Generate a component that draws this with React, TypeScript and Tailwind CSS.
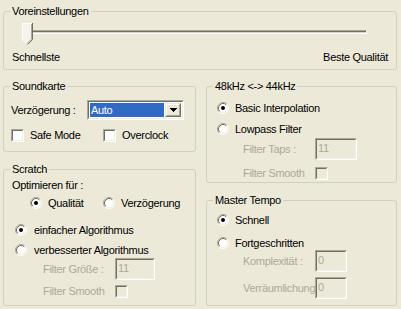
import React from "react";

const sunkenOuter = "border border-t-[#aca899] border-l-[#aca899] border-r-white border-b-white";
const sunkenInner = "border border-t-[#716f64] border-l-[#716f64] border-r-[#f1efe2] border-b-[#f1efe2]";

function Group({ title, className, children }: { title: string; className?: string; children?: React.ReactNode }) {
  return (
    <fieldset className={`border border-[#d0d0bf] rounded-[3px] ${className ?? ""}`}>
      <legend className="ml-[6px] px-[2px] h-[13px] leading-[13px]">{title}</legend>
      {children}
    </fieldset>
  );
}

function Radio({ checked }: { checked?: boolean }) {
  return (
    <svg width="12" height="12" viewBox="0 0 12 12" className="shrink-0">
      <circle cx="6" cy="6" r="4.5" fill="#fff" />
      <path d="M2.11 9.89A5.5 5.5 0 0 1 9.89 2.11" stroke="#aca899" fill="none" />
      <path d="M9.89 2.11A5.5 5.5 0 0 1 2.11 9.89" stroke="#fff" fill="none" />
      <path d="M2.82 9.18A4.5 4.5 0 0 1 9.18 2.82" stroke="#716f64" fill="none" />
      <path d="M9.18 2.82A4.5 4.5 0 0 1 2.82 9.18" stroke="#f1efe2" fill="none" />
      {checked && <circle cx="6" cy="6" r="2" fill="#000" />}
    </svg>
  );
}

function Check({ disabled }: { disabled?: boolean }) {
  return (
    <span className={`block w-[13px] h-[13px] shrink-0 ${sunkenOuter}`}>
      <span className={`block h-full ${sunkenInner} ${disabled ? "bg-[#ece9d8]" : "bg-white"}`} />
    </span>
  );
}

function Edit({ value, className }: { value: string; className: string }) {
  return (
    <span className={`block shrink-0 ${sunkenOuter} ${className}`}>
      <span className={`flex items-center h-full pl-[1px] pb-[2px] bg-[#ece9d8] text-[#aca899] ${sunkenInner}`}>{value}</span>
    </span>
  );
}

function RadioRow({ label, checked, className }: { label: string; checked?: boolean; className: string }) {
  return (
    <div className={`flex items-center h-[12px] gap-[6px] ${className}`}>
      <Radio checked={checked} />
      <span>{label}</span>
    </div>
  );
}

export default function App() {
  return (
    <div className="w-[401px] h-[309px] overflow-hidden bg-[#ece9d8] pl-[3px] pt-[5px] text-[11px] leading-[13px] tracking-[-0.3px] text-black font-['Liberation_Sans',Arial,sans-serif]">
      <Group title="Voreinstellungen" className="w-[394px] h-[65px]">
        <div className="relative ml-[18px] mt-[5px] w-[350px] h-[22px]">
          <div className={`absolute left-[5px] right-[5px] top-[7px] h-[4px] ${sunkenOuter}`}>
            <div className="h-full border-t border-[#716f64] bg-[#d8d5c8]" />
          </div>
          <svg width="11" height="22" viewBox="0 0 11 22" className="absolute left-0 top-0">
            <path d="M0 0h10v16l-5 5l-5-5z" fill="#f4f3ee" />
            <path d="M0.5 16V0.5H9.5" stroke="#fff" fill="none" />
            <path d="M0.5 16.5L5 21" stroke="#fff" fill="none" />
            <path d="M10.5 0V16.5L5.5 21.5" stroke="#716f64" fill="none" />
            <path d="M9.5 1V16L5 20.5" stroke="#aca899" fill="none" />
          </svg>
        </div>
        <div className="flex justify-between px-[8px] mt-[6px]">
          <span>Schnellste</span>
          <span>Beste Qualität</span>
        </div>
      </Group>

      <div className="flex gap-[10px] mt-[10px]">
        <div className="flex flex-col w-[193px] gap-[11px]">
          <Group title="Soundkarte" className="h-[72px]">
            <div className="flex items-center pl-[7px] mt-[7px]">
              <span className="w-[76px]">Verzögerung :</span>
              <span className={`flex w-[97px] h-[20px] ${sunkenOuter}`}>
                <span className={`flex flex-1 p-[1px] gap-[1px] bg-white ${sunkenInner}`}>
                  <span className="flex-1 flex items-center pl-[1px] bg-[#316ac5] text-white">Auto</span>
                  <span className="w-[16px] border border-t-[#ece9d8] border-l-[#ece9d8] border-r-[#716f64] border-b-[#716f64]">
                    <span className="flex items-center justify-center h-full border border-t-white border-l-white border-r-[#aca899] border-b-[#aca899] bg-[#ece9d8]">
                      <svg width="7" height="4" viewBox="0 0 7 4">
                        <path d="M0 0h7v1h-1v1h-1v1h-1v1h-1v-1h-1v-1h-1v-1h-1z" fill="#000" />
                      </svg>
                    </span>
                  </span>
                </span>
              </span>
            </div>
            <div className="flex items-center h-[13px] pl-[7px] mt-[9px]">
              <div className="flex items-center gap-[6px] w-[92px]">
                <Check />
                <span>Safe Mode</span>
              </div>
              <div className="flex items-center gap-[6px]">
                <Check />
                <span>Overclock</span>
              </div>
            </div>
          </Group>

          <Group title="Scratch" className="h-[143px]">
            <div className="pl-[8px] mt-[3px]">Optimieren für :</div>
            <div className="flex items-center pl-[26px] mt-[5px]">
              <RadioRow label="Qualität" checked className="w-[73px] gap-[5px]" />
              <RadioRow label="Verzögerung" className="gap-[4px]" />
            </div>
            <RadioRow label="einfacher Algorithmus" checked className="pl-[11px] mt-[15px] gap-[7px]" />
            <RadioRow label="verbesserter Algorithmus" className="pl-[11px] mt-[8px] gap-[7px]" />
            <div className="flex items-center pl-[39px] mt-[2px] text-[#aca899]">
              <span className="w-[72px]">Filter Größe :</span>
              <Edit value="11" className="w-[40px] h-[22px]" />
            </div>
            <div className="flex items-center pl-[39px] mt-[5px] text-[#aca899]">
              <span className="w-[72px]">Filter Smooth</span>
              <Check disabled />
            </div>
          </Group>
        </div>

        <div className="flex flex-col w-[191px] gap-[11px]">
          <Group title="48kHz <-> 44kHz" className="h-[103px]">
            <RadioRow label="Basic Interpolation" checked className="pl-[10px] mt-[9px]" />
            <RadioRow label="Lowpass Filter" className="pl-[10px] mt-[9px]" />
            <div className="flex items-center pl-[36px] mt-[3px] text-[#aca899]">
              <span className="w-[72px]">Filter Taps :</span>
              <Edit value="11" className="w-[42px] h-[22px]" />
            </div>
            <div className="flex items-center pl-[36px] mt-[7px] text-[#aca899]">
              <span className="w-[72px]">Filter Smooth</span>
              <Check disabled />
            </div>
          </Group>

          <Group title="Master Tempo" className="h-[112px]">
            <RadioRow label="Schnell" checked className="pl-[10px] mt-[7px]" />
            <RadioRow label="Fortgeschritten" className="pl-[10px] mt-[11px]" />
            <div className="flex items-center pl-[36px] mt-[1px] text-[#aca899]">
              <span className="w-[72px] overflow-hidden whitespace-nowrap">Komplexität :</span>
              <Edit value="0" className="w-[32px] h-[22px]" />
            </div>
            <div className="flex items-center pl-[36px] mt-[5px] text-[#aca899]">
              <span className="w-[72px] overflow-hidden whitespace-nowrap">Verräumlichung</span>
              <Edit value="0" className="w-[32px] h-[22px]" />
            </div>
          </Group>
        </div>
      </div>
    </div>
  );
}
